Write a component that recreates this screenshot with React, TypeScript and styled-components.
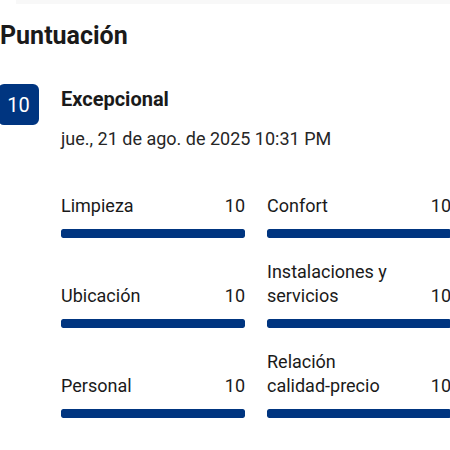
import React from "react";
import styled, { createGlobalStyle } from "styled-components";

const BookingBlue = "#003580";

const GlobalStyle = createGlobalStyle`
  html, body {
    margin: 0;
    padding: 0;
    background: #ffffff;
    overflow: hidden;
  }
  body {
    font-family: Roboto, "Liberation Sans", sans-serif;
    color: #1a1a1a;
  }
`;

const Page = styled.div`
  width: 451px;
  display: flex;
  flex-direction: column;
`;

const TopStrip = styled.div`
  height: 4px;
  margin-left: 16px;
  background-color: #f8f8f8;
`;

const Title = styled.h2`
  margin: 16px 0 0 0;
  font-size: 25px;
  line-height: 32px;
  font-weight: 700;
  color: #1a1a1a;
`;

const ScoreRow = styled.div`
  display: flex;
  flex-direction: row;
  margin-top: 32px;
`;

const Badge = styled.div`
  width: 41px;
  height: 41px;
  margin-left: -2px;
  flex-shrink: 0;
  display: flex;
  align-items: center;
  justify-content: center;
  background-color: ${BookingBlue};
  border-radius: 6px;
  color: #ffffff;
  font-size: 20px;
  font-weight: 400;
`;

const ScoreBody = styled.div`
  display: flex;
  flex-direction: column;
  flex: 1;
  margin-left: 22px;
  padding-top: 3px;
`;

const ScoreWord = styled.div`
  font-size: 20px;
  line-height: 24px;
  font-weight: 700;
`;

const ReviewDate = styled.div`
  margin-top: 16px;
  font-size: 18px;
  line-height: 24px;
  color: #262626;
`;

const Categories = styled.div`
  display: grid;
  grid-template-columns: 184px 184px;
  column-gap: 22px;
  row-gap: 22px;
  margin-top: 43px;
`;

const Category = styled.div`
  display: flex;
  flex-direction: column;
  justify-content: flex-end;
`;

const CategoryHead = styled.div`
  display: flex;
  flex-direction: row;
  align-items: flex-end;
  justify-content: space-between;
  gap: 12px;
  font-size: 18px;
  line-height: 24px;
  color: #1a1a1a;
`;

const Word = styled.span`
  white-space: nowrap;
`;

const Bar = styled.div`
  margin-top: 11px;
  height: 9px;
  border-radius: 2px;
  background-color: #e6e6e6;
  overflow: hidden;
`;

const BarFill = styled.div`
  height: 100%;
  background-color: ${BookingBlue};
  border-radius: 2px;
`;

const categories = [
  { name: "Limpieza", score: 10 },
  { name: "Confort", score: 10 },
  { name: "Ubicación", score: 10 },
  { name: "Instalaciones y servicios", score: 10 },
  { name: "Personal", score: 10 },
  { name: "Relación calidad-precio", score: 10 },
];

export default function App() {
  return (
    <>
      <GlobalStyle />
      <Page>
        <TopStrip />
        <Title>Puntuación</Title>
        <ScoreRow>
          <Badge>10</Badge>
          <ScoreBody>
            <ScoreWord>Excepcional</ScoreWord>
            <ReviewDate>jue., 21 de ago. de 2025 10:31 PM</ReviewDate>
            <Categories>
              {categories.map((c) => (
                <Category key={c.name}>
                  <CategoryHead>
                    <span>
                      {c.name.split(" ").map((w, i) => (
                        <React.Fragment key={i}>
                          {i > 0 && " "}
                          <Word>{w}</Word>
                        </React.Fragment>
                      ))}
                    </span>
                    <span>{c.score}</span>
                  </CategoryHead>
                  <Bar>
                    <BarFill style={{ width: `${c.score * 10}%` }} />
                  </Bar>
                </Category>
              ))}
            </Categories>
          </ScoreBody>
        </ScoreRow>
      </Page>
    </>
  );
}
